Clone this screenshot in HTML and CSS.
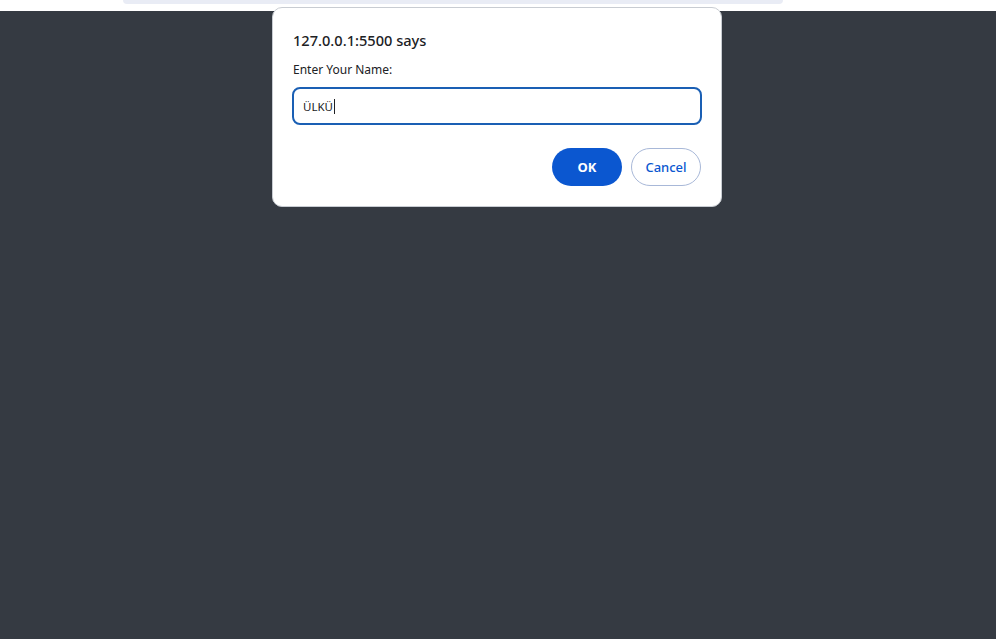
FILE: index.html
```html
<!DOCTYPE html>
<html>
<head>
<meta charset="utf-8">
<link rel="stylesheet" href="styles.css">
</head>
<body>
<div class="topstrip"><div class="topbar"></div></div>
<div class="stage"></div>
<div class="dialog">
  <div class="title">127.0.0.1:5500 says</div>
  <div class="label">Enter Your Name:</div>
  <div class="input"><span class="value">ÜLKÜ</span><span class="caret"></span></div>
  <div class="actions">
    <button class="btn btn-ok">OK</button>
    <button class="btn btn-cancel">Cancel</button>
  </div>
</div>
</body>
</html>
```
FILE: styles.css
```css
html, body { margin: 0; padding: 0; }
body {
  width: 996px;
  height: 639px;
  overflow: hidden;
  font-family: "Noto Sans", "Open Sans", sans-serif;
  background: #353a42;
  position: relative;
}
.topstrip {
  height: 11px;
  background: #ffffff;
  padding: 0 213px 0 123px;
}
.topbar {
  height: 4px;
  background: #e9ecf5;
  border-radius: 0 0 8px 8px;
}
.stage { height: 628px; background: #353a42; }
.dialog {
  position: absolute;
  left: 272px;
  top: 7px;
  width: 450px;
  height: 200px;
  box-sizing: border-box;
  background: #ffffff;
  border: 1px solid #c8ccd2;
  border-radius: 10px;
  padding: 22px 19px 0 19px;
}
.title {
  font-size: 14.6px;
  font-weight: 500;
  color: #202124;
  line-height: 20px;
  padding-left: 1px;
}
.label {
  margin-top: 12px;
  font-size: 12px;
  color: #202124;
  line-height: 16px;
  padding-left: 1px;
}
.input {
  margin-top: 9px;
  height: 38px;
  box-sizing: border-box;
  border: 2px solid #1a5fb4;
  border-radius: 8px;
  display: flex;
  align-items: center;
  padding-left: 9px;
  font-size: 11.5px;
  color: #202124;
}
.caret {
  display: inline-block;
  width: 1px;
  height: 15px;
  background: #202124;
  margin-left: 1px;
}
.actions {
  margin-top: 23px;
  display: flex;
  justify-content: flex-end;
  gap: 9px;
  padding-right: 1px;
}
.btn {
  width: 70px;
  height: 38px;
  border-radius: 19px;
  font-family: "Noto Sans", "Open Sans", sans-serif;
  font-size: 13px;
  cursor: pointer;
}
.btn-ok {
  background: #0b57d0;
  color: #ffffff;
  border: none;
  font-weight: 700;
}
.btn-cancel {
  background: #ffffff;
  color: #0b57d0;
  border: 1px solid #a8b8d8;
  font-weight: 500;
}
```
